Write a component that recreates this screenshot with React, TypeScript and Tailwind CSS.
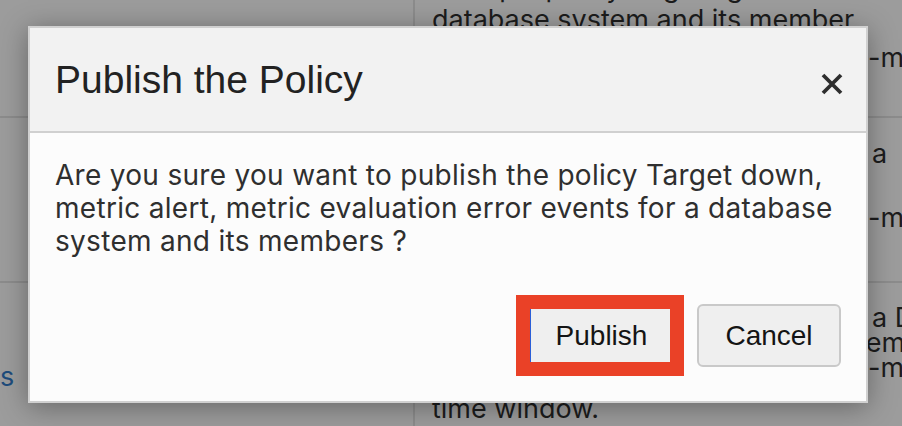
import React from "react";

function CloseIcon() {
  return (
    <svg width="22" height="22" viewBox="0 0 22 22" aria-hidden="true">
      <path d="M2 2 L20 20 M20 2 L2 20" stroke="#2e2e2e" strokeWidth="3.8" strokeLinecap="butt" />
    </svg>
  );
}

export default function App() {
  return (
    <div className="relative h-[426px] w-[902px] overflow-hidden bg-[#9c9c9c] font-['Inter','Liberation_Sans',sans-serif]">
      {/* dimmed page behind the dialog */}
      <div className="grid h-full grid-cols-[415px_1fr] grid-rows-[118px_165px_1fr] text-[27px] leading-[32px] text-[#1c1c1c]">
        <div className="border-b-2 border-r-2 border-[#8c8c8c]" />
        <div className="overflow-hidden border-b-2 border-[#8c8c8c] pl-[17px]">
          <div className="-mt-[28px] whitespace-nowrap">a simple policy targeting the</div>
          <div className="whitespace-nowrap">database system and its member</div>
          <div className="mt-[6px] whitespace-nowrap pl-[436px]">-minute</div>
        </div>
        <div className="border-b-2 border-r-2 border-[#8c8c8c]" />
        <div className="overflow-hidden border-b-2 border-[#8c8c8c] pl-[17px] pt-[20px]">
          <div className="whitespace-nowrap pl-[440px]">a</div>
          <div className="whitespace-nowrap pl-[436px]">&nbsp;</div>
          <div className="whitespace-nowrap pl-[436px]">-minute</div>
        </div>
        <div className="border-r-2 border-[#8c8c8c] pt-[78px]">
          <div className="whitespace-nowrap text-[#1e4c7c]">s</div>
        </div>
        <div className="overflow-hidden pl-[17px] pt-[22px] leading-[25px]">
          <div className="whitespace-nowrap pl-[440px]">a D</div>
          <div className="whitespace-nowrap pl-[410px]">members</div>
          <div className="whitespace-nowrap pl-[436px]">-minute</div>
          <div className="mt-[16px] whitespace-nowrap">time window.</div>
        </div>
      </div>

      {/* dialog */}
      <div className="absolute left-[28px] top-[26px] flex h-[377px] w-[840px] flex-col border-2 border-[#d0d0d0] bg-[#fcfcfc] shadow-[0_4px_26px_rgba(0,0,0,0.35)]">
        <div className="flex h-[105px] shrink-0 items-center justify-between border-b-2 border-[#d0d0d0] bg-[#f2f2f2] pl-[25px] pr-[23px]">
          <h1 className="font-['Liberation_Sans',sans-serif] text-[39px] leading-none text-[#222222]">Publish the Policy</h1>
          <div className="mt-[8px]">
            <CloseIcon />
          </div>
        </div>
        <div className="flex-1 pl-[25px] pr-[10px] pt-[26px] text-[28px] leading-[33px] tracking-[0.3px] text-[#2f2f2f]">
          Are you sure you want to publish the policy Target down,
          <br />
          metric alert, metric evaluation error events for a database
          <br />
          system and its members ?
        </div>
        <div className="flex items-center justify-end gap-[13px] pb-[25px] pr-[25px] font-['Liberation_Sans',sans-serif] text-[28px] text-[#141414]">
          <div className="h-[81px] w-[168px] border-[14px] border-[#ea4127]">
            <button className="flex h-full w-full items-center justify-center border-l-[1.5px] border-[#2b5fd8] bg-[#efefef] pl-[2px]">
              Publish
            </button>
          </div>
          <button className="flex h-[63px] w-[144px] items-center justify-center rounded-[6px] border-2 border-[#c9c9c9] bg-[#efefef]">
            Cancel
          </button>
        </div>
      </div>
    </div>
  );
}
